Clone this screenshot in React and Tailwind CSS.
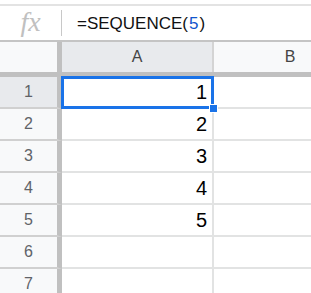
export default function App() {
  const rows = [1, 2, 3, 4, 5, 6, 7];

  return (
    <div className="w-[311px] h-[293px] overflow-hidden bg-white font-['Liberation_Sans',Arial,sans-serif]">
      {/* formula bar */}
      <div className="h-[4px]"></div>
      <div className="h-[38px] border-t-2 border-b-2 border-t-[#e3e3e3] border-b-[#c4c4c4] flex items-center">
        <div className="w-[61px] flex justify-center">
          <span className="font-['Liberation_Serif',serif] italic text-[28px] leading-none text-[#c0c0c0] -mt-[2px]">fx</span>
        </div>
        <div className="w-px h-[26px] bg-[#c8c8c8]"></div>
        <div className="pl-[15px] text-[17px] text-[#111] leading-none">
          =SEQUENCE(<span className="text-[#1155cc] px-[1px]">5</span>)
        </div>
      </div>

      {/* column headers */}
      <div className="flex h-[35px] border-b-[5px] border-[#c0c0c0]">
        <div className="w-[62px] shrink-0 bg-[#f8f9fa] border-r-[5px] border-[#c0c0c0]"></div>
        <div className="w-[152px] shrink-0 bg-[#e8eaed] border-r-2 border-[#d4d4d4] flex items-center justify-center text-[16px] text-[#444]">
          A
        </div>
        <div className="w-[152px] shrink-0 bg-[#f8f9fa] flex items-center justify-center text-[16px] text-[#444]">
          B
        </div>
      </div>

      {/* rows */}
      {rows.map((r) => (
        <div key={r} className="flex h-[32px]">
          <div
            className={`w-[62px] shrink-0 border-r-[5px] border-b-2 border-r-[#c0c0c0] border-b-[#d0d0d0] flex items-center justify-center text-[16px] text-[#5f6368] ${
              r === 1 ? "bg-[#e8eaed]" : "bg-[#f8f9fa]"
            }`}
          >
            {r}
          </div>
          <div className="relative w-[152px] shrink-0 border-r-2 border-b-2 border-[#e2e3e3] flex items-center justify-end pr-[5px] text-[20px] text-black">
            {r <= 5 ? r : ""}
            {r === 1 && (
              <>
                <div className="absolute -left-px -top-px -right-[2px] -bottom-[2px] border-[3px] border-[#1a73e8]"></div>
                <div className="absolute -right-[6px] -bottom-[6px] w-[9px] h-[9px] bg-[#1a73e8] border border-white z-10"></div>
              </>
            )}
          </div>
          <div className="w-[152px] shrink-0 border-b-2 border-[#e2e3e3]"></div>
        </div>
      ))}
    </div>
  );
}
